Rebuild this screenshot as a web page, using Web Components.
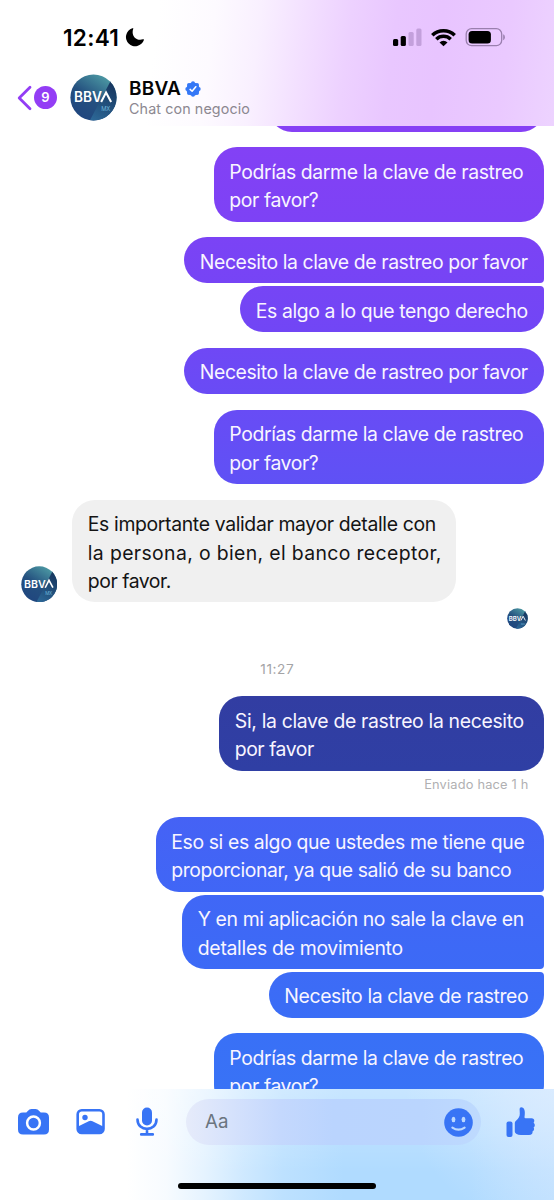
<!DOCTYPE html>
<html lang="es">
<head>
<meta charset="utf-8">
<title>BBVA</title>
<style>
html,body{margin:0;padding:0;background:#fff}
body{width:554px;height:1200px;overflow:hidden;font-family:Inter,"Liberation Sans",sans-serif}
</style>
</head>
<body>
<chat-screen>
  <chat-header slot="header"></chat-header>
  <chat-bubble w="275" gap="-40.5"></chat-bubble>
  <chat-bubble w="330" gap="15.8" tone="#8341f5,#7d42f5"><fit-line w="293">Podrías darme la clave de rastreo</fit-line><fit-line w="88">por favor?</fit-line></chat-bubble>
  <chat-bubble w="359.5" gap="15.6" tone="#7b43f5,#7644f5" shape="first"><fit-line w="327">Necesito la clave de rastreo por favor</fit-line></chat-bubble>
  <chat-bubble w="303.5" gap="2.8" tone="#7645f5,#7146f5" shape="last"><fit-line w="271">Es algo a lo que tengo derecho</fit-line></chat-bubble>
  <chat-bubble w="359.5" gap="15.8" tone="#6f48f5,#694bf5"><fit-line w="327">Necesito la clave de rastreo por favor</fit-line></chat-bubble>
  <chat-bubble w="330" gap="15.8" tone="#684cf5,#5f51f5"><fit-line w="293">Podrías darme la clave de rastreo</fit-line><fit-line w="88">por favor?</fit-line></chat-bubble>
  <incoming-row><fit-line w="347">Es importante validar mayor detalle con</fit-line><fit-line w="353">la persona, o bien, el banco receptor,</fit-line><fit-line w="82">por favor.</fit-line></incoming-row>
  <seen-mark></seen-mark>
  <time-label>11:27</time-label>
  <chat-bubble w="324.5" gap="17" tone="#323da2,#2f3fa4"><fit-line w="288">Si, la clave de rastreo la necesito</fit-line><fit-line w="78">por favor</fit-line></chat-bubble>
  <sent-label>Enviado hace 1 h</sent-label>
  <chat-bubble w="388" gap="23.9" tone="#4562f5,#4066f6" shape="first"><fit-line w="352">Eso si es algo que ustedes me tiene que</fit-line><fit-line w="339">proporcionar, ya que salió de su banco</fit-line></chat-bubble>
  <chat-bubble w="361.5" gap="2.8" tone="#4067f6,#3c6af6" shape="mid"><fit-line w="325">Y en mi aplicación no sale la clave en</fit-line><fit-line w="204">detalles de movimiento</fit-line></chat-bubble>
  <chat-bubble w="275" gap="2.8" tone="#3d6bf6,#3a6df6" shape="last"><fit-line w="243">Necesito la clave de rastreo</fit-line></chat-bubble>
  <chat-bubble w="330" gap="15.8" tone="#3970f6,#3873f6"><fit-line w="293">Podrías darme la clave de rastreo</fit-line><fit-line w="88">por favor?</fit-line></chat-bubble>
  <chat-composer slot="footer"></chat-composer>
</chat-screen>
<script>
const build = (host, html) => {
  const t = document.createElement('template');
  t.innerHTML = html;
  host.attachShadow({mode:'open'}).appendChild(t.content.cloneNode(true));
};

customElements.define('chat-screen', class extends HTMLElement {
  constructor(){ super(); build(this, `<style>
    :host{display:flex;flex-direction:column;width:554px;height:1200px;background:#fff}
    main{flex:1;min-height:0;overflow:hidden;display:flex;flex-direction:column;padding:0 10.5px 0 20px}
    main ::slotted(*){flex:none}
    </style><slot name="header"></slot><main><slot></slot></main><slot name="footer"></slot>`); }
});

customElements.define('chat-bubble', class extends HTMLElement {
  constructor(){ super(); build(this, `<style>
    :host{display:block;box-sizing:border-box;align-self:flex-end;border-radius:23px;color:#f8f5ff;
      font-size:19.4px;line-height:28.3px;padding:10.7px 0 7px 15.8px;min-height:46px}
    :host([shape=first]){border-bottom-right-radius:4px}
    :host([shape=mid]){border-top-right-radius:4px;border-bottom-right-radius:4px}
    :host([shape=last]){border-top-right-radius:4px}
    </style><slot></slot>`); }
  connectedCallback(){
    this.style.width = this.getAttribute('w') + 'px';
    this.style.marginTop = this.getAttribute('gap') + 'px';
    this.style.background = `linear-gradient(${this.getAttribute('tone') || '#8640f5,#8640f5'})`;
  }
});

customElements.define('bank-avatar', class extends HTMLElement {
  constructor(){ super(); build(this, `<style>
    :host{display:block;width:var(--size,36px);height:var(--size,36px)}
    svg{display:block;width:100%;height:100%}
    text{font-family:Inter,sans-serif}
    </style><svg viewBox="0 0 48 48">
    <defs><linearGradient id="a" x1="0.1" y1="1" x2="0.75" y2="0"><stop offset="0" stop-color="#1f447f"/><stop offset=".5" stop-color="#24507f"/><stop offset="1" stop-color="#4f9ea6"/></linearGradient>
    <linearGradient id="b" x1="0.6" y1="0" x2="0.2" y2="1"><stop offset="0" stop-color="#17365f"/><stop offset="1" stop-color="#2c6796"/></linearGradient>
    <clipPath id="c"><circle cx="24" cy="24" r="23.6"/></clipPath></defs>
    <g clip-path="url(#c)"><rect width="48" height="48" fill="url(#a)"/><path d="M42 6L20 48H48V6Z" fill="url(#b)"/></g>
    <text x="4" y="28.7" font-size="14.2" font-weight="600" fill="#fff" textLength="28.5" lengthAdjust="spacingAndGlyphs">BBV</text>
    <path d="M31.800 28.600L36.800 18.800L42 28.600" fill="none" stroke="#fff" stroke-width="2.100"/>
    <text x="32" y="37.8" font-size="6" fill="#6db4d8" textLength="9">MX</text></svg>`); }
});

customElements.define('incoming-row', class extends HTMLElement {
  constructor(){ super(); build(this, `<style>
    :host{display:flex;align-items:flex-end;gap:15px;margin-top:15.7px}
    div{box-sizing:border-box;width:384px;border-radius:23px;background:#f0f0f0;color:#141414;font-size:19.4px;line-height:28.3px;padding:10.7px 0 7px 15.8px}
    bank-avatar{--size:36.5px;margin-left:.5px}
    </style><bank-avatar></bank-avatar><div><slot></slot></div>`); }
});

customElements.define('seen-mark', class extends HTMLElement {
  constructor(){ super(); build(this, `<style>
    :host{display:flex;justify-content:flex-end;padding:5.6px 15.2px 0 0}
    bank-avatar{--size:21px}
    </style><bank-avatar></bank-avatar>`); }
});

customElements.define('time-label', class extends HTMLElement {
  constructor(){ super(); build(this, `<style>
    :host{display:block;margin:31.6px 0 0 -9px;height:19px;line-height:19px;text-align:center;font-size:13.6px;letter-spacing:.6px;color:#a4a4a6}
    </style><slot></slot>`); }
});

customElements.define('sent-label', class extends HTMLElement {
  constructor(){ super(); build(this, `<style>
    :host{display:block;margin-top:5px;height:18px;line-height:18px;text-align:right;padding-right:15px;font-size:12.800px;letter-spacing:.2px;color:#b0b0b2}
    </style><slot></slot>`); }
});

customElements.define('status-bar', class extends HTMLElement {
  constructor(){ super(); build(this, `<style>
    :host{display:flex;align-items:center;height:75px;box-sizing:border-box;padding:0 49px 0 63px}
    b{width:58px;font-size:22.6px;font-weight:600;line-height:28px;color:#000;letter-spacing:.3px;white-space:nowrap}
    svg{display:block;margin-bottom:1.500px}
    .moon{margin-left:3.500px}
    .r{margin-left:auto}
    </style><b>12:41</b>
    <svg class="moon" width="20" height="20" viewBox="0 0 20 20"><path d="M8.2 1.2C7.9 1.1 7.7 1.1 7.3 1.3A9.2 9.2 0 1 0 18.9 12.9C19 12.5 18.9 12.3 18.6 12.2C18.4 12.1 18.2 12.2 18 12.3C11.500 14.500 5.800 8.800 8.200 2C8.300 1.600 8.400 1.300 8.200 1.200Z"/></svg>
    <svg class="r" width="113" height="20" viewBox="392 27 113 20">
      <g><rect x="393" y="39" width="5.200" height="7" rx="1.500"/><rect x="400.700" y="36" width="5.200" height="10" rx="1.500"/><g fill="#c3a0dc"><rect x="408.500" y="32" width="5.200" height="14" rx="1.500"/><rect x="416.300" y="28.500" width="5.200" height="17.500" rx="1.500"/></g></g>
      <g fill="none" stroke="#000" stroke-width="3.500"><path d="M432.300 35.200A16 16 0 0 1 454.700 35.200"/><path d="M436.300 39.300A10.300 10.300 0 0 1 450.700 39.300"/></g>
      <path d="M439.500 42.500A5.700 5.700 0 0 1 447.500 42.500L443.500 46.300Z"/>
      <rect x="466.200" y="28.700" width="35.500" height="17" rx="5.400" fill="none" stroke="#9a7fae" stroke-width="1.300"/>
      <rect x="468.600" y="31" width="22.300" height="12.400" rx="3.500"/>
      <path d="M503.200 34.300C505.400 35 505.400 39.500 503.200 40.200Z" fill="#9a7fae"/></svg>`); }
});

customElements.define('chat-header', class extends HTMLElement {
  constructor(){ super(); build(this, `<style>
    :host{display:block;flex:none;height:126px;background:
      linear-gradient(97deg,#fff 28%,#fdfaff 38%,#f9f0ff 46%,#f3e0ff 54%,#edd1ff 62%,#e9c7ff 70%,#e8c4ff 78%,#eac9ff 90%,#edd3ff 100%)}
    nav{display:flex;align-items:center;height:45px;padding-left:17px}
    svg{display:block}
    .n{width:23px;height:23px;border-radius:50%;background:#933df5;color:#fff;font-weight:600;font-size:13px;line-height:23px;text-align:center;margin-left:1px}
    bank-avatar{--size:47px;margin-left:12.500px}
    .who{margin-left:12.500px;display:flex;flex-direction:column}
    .t{display:flex;align-items:center;gap:4px;height:22px;font-size:19px;font-weight:600;color:#050505;line-height:22px}
    .s{height:17px;line-height:17px;font-size:14.300px;color:#8c8891}
    </style><status-bar></status-bar>
    <nav><svg width="16" height="26" viewBox="0 0 16 26"><path d="M13 2.300L2.200 13L13 23.800" fill="none" stroke="#933df5" stroke-width="2.800" stroke-linecap="round" stroke-linejoin="round"/></svg>
    <div class="n">9</div><bank-avatar></bank-avatar>
    <div class="who"><div class="t"><fit-line w="51">BBVA</fit-line>
    <svg width="16" height="16" viewBox="0 0 16 16"><g fill="#3578f6"><circle cx="8" cy="8" r="6.600"/><circle cx="8" cy="2.300" r="2"/><circle cx="12" cy="4" r="2"/><circle cx="13.700" cy="8" r="2"/><circle cx="12" cy="12" r="2"/><circle cx="8" cy="13.700" r="2"/><circle cx="4" cy="12" r="2"/><circle cx="2.300" cy="8" r="2"/><circle cx="4" cy="4" r="2"/></g><path d="M5.100 8.400L7.100 10.300L10.800 5.700" fill="none" stroke="#fff" stroke-width="1.500" stroke-linecap="round" stroke-linejoin="round"/></svg></div>
    <div class="s"><fit-line w="120">Chat con negocio</fit-line></div></div></nav>`); }
});

customElements.define('chat-composer', class extends HTMLElement {
  constructor(){ super(); build(this, `<style>
    :host{display:block;flex:none;height:111px;box-sizing:border-box;padding-top:10px;background:
      radial-gradient(ellipse 150px 140px at 100% 0,rgba(220,236,255,.75),rgba(220,236,255,0)),
      linear-gradient(180deg,rgba(255,255,255,.3),rgba(255,255,255,0) 75%),
      linear-gradient(90deg,#fff 23%,#f7fbff 30%,#e5f3ff 37%,#cfe9ff 44%,#bde1ff 51%,#b0dbff 62%,#b0dbff 85%,#bfe0ff 100%)}
    .bar{display:flex;align-items:center;height:46px;padding-left:18px}
    svg{display:block;flex:none}
    .f{display:flex;align-items:center;justify-content:space-between;box-sizing:border-box;width:295px;height:46px;border-radius:23px;margin-left:27px;padding:0 8.300px 0 19px;
      background:linear-gradient(90deg,#e6ebfa 0,#d6e2fc 15%,#c4d8fd 32%,#bad4fe 50%,#bad5fe 80%,#bedafe);color:#6b7580;font-size:18.700px}
    .f span{padding-bottom:2px}
    .home{width:198px;height:6px;border-radius:3px;background:#000;margin:38px auto 0}
    </style><div class="bar">
    <svg width="32" height="28" viewBox="0 0 32 28"><path d="M8.300 4.600L9.800 2.900Q11.200 1 13.500 1H17.500Q19.800 1 21.200 2.900L22.700 4.600H26Q31 4.600 31 9.600V21.500Q31 26.500 26 26.500H5Q0 26.500 0 21.500V9.600Q0 4.600 5 4.600Z" fill="#3874f5"/><circle cx="15.500" cy="15" r="6.400" fill="none" stroke="#fff" stroke-width="2.500"/></svg>
    <svg style="margin-left:25.500px" width="30" height="28" viewBox="0 0 30 28"><rect x="1.700" y="2.200" width="25.800" height="22.800" rx="4" fill="none" stroke="#3874f5" stroke-width="2.600"/><circle cx="9" cy="9.500" r="2.700" fill="#3874f5"/><path d="M2 18.500L12.700 13.200Q14.600 12.400 16.500 13.200L27.200 18.500V22Q27 25 23 25H6Q2 25 2 22Z" fill="#3874f5"/></svg>
    <svg style="margin-left:30.500px" width="23" height="30" viewBox="0 0 23 30"><rect x="6" y="0.500" width="10" height="18" rx="5" fill="#3874f5"/><path d="M1.500 12.500C1.500 25 20.500 25 20.500 12.500M11 22V27M5.200 27.400H16.800" fill="none" stroke="#3874f5" stroke-width="2.600" stroke-linecap="round"/></svg>
    <div class="f"><span>Aa</span><svg width="29" height="29" viewBox="0 0 29 29"><circle cx="14.500" cy="14.500" r="14.300" fill="#3874f5"/><ellipse cx="9.500" cy="11.500" rx="1.900" ry="2.700" fill="#bcd8fe"/><ellipse cx="19.500" cy="11.500" rx="1.900" ry="2.700" fill="#bcd8fe"/><path d="M8.400 19.600Q14.500 23.800 20.600 19.600" fill="none" stroke="#bcd8fe" stroke-width="2.200" stroke-linecap="round"/></svg></div>
    <svg style="margin-left:24.500px" width="30" height="32" viewBox="0 0 30 32"><g fill="#3874f5"><rect x="0.500" y="15.500" width="6" height="15.500" rx="2"/><path d="M8.800 17Q8.800 15.800 10 14.800Q14 11.500 13.800 7.500L13.600 3Q13.600 1.200 15.200 1.200C18.500 1.200 19.500 5 18.500 11Q18.400 12.300 19.500 12.300H25.500Q28.300 12.300 28.300 14.800Q28.300 16 27.600 16.800Q29 17.800 28.800 19.400Q28.600 20.800 27.600 21.400Q28.400 22.500 28 23.800Q27.600 25 26.500 25.400Q27 28.800 23 29H15Q12 29 10.200 27.800Q8.800 27 8.800 25.500Z"/></g></svg>
    </div><div class="home"></div>`); }
});

/* One line of text, tracked so that it spans the width given in px.
   Defined last: its containers must have set their font size before it measures. */
customElements.define('fit-line', class extends HTMLElement {
  constructor(){ super(); build(this, `<style>
    :host{display:block;white-space:nowrap}
    span{display:inline-block}
    </style><span><slot></slot></span>`); }
  connectedCallback(){
    const w = parseFloat(this.getAttribute('w')), n = this.textContent.length;
    const s = this.shadowRoot.querySelector('span');
    s.style.letterSpacing = '0px';
    s.style.letterSpacing = ((w + 1 - s.getBoundingClientRect().width) / n).toFixed(3) + 'px';
  }
});
</script>
</body>
</html>
